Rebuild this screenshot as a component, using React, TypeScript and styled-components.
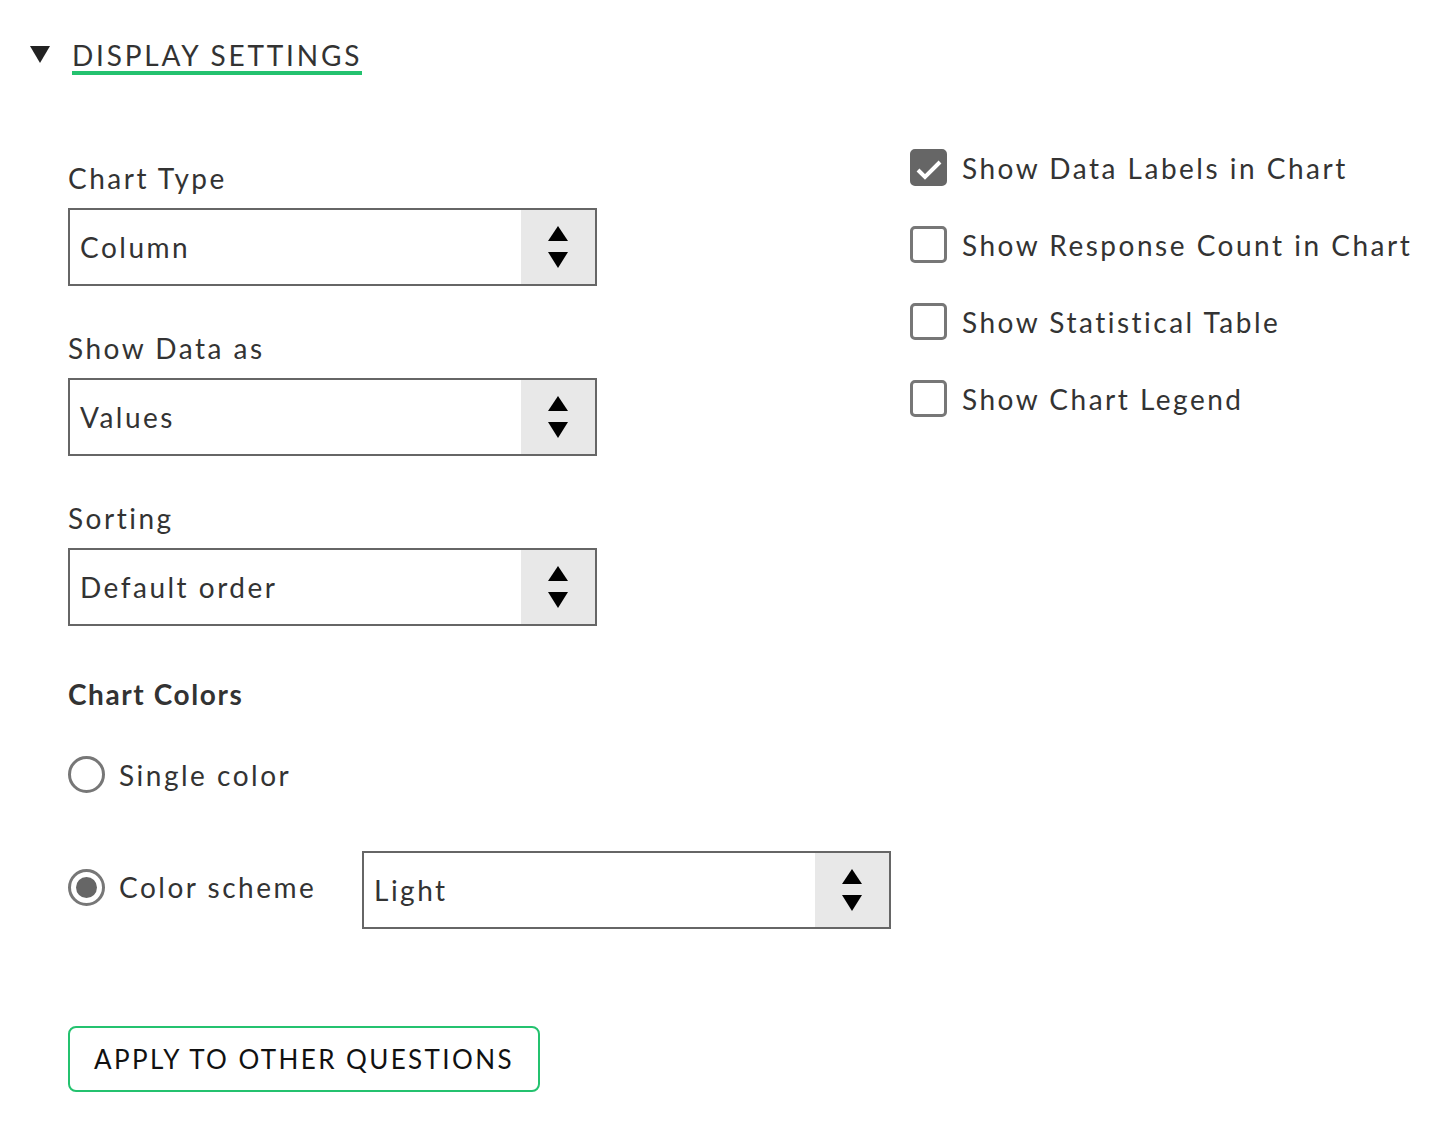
import React from "react";
import styled, { createGlobalStyle } from "styled-components";

const Global = createGlobalStyle`
  html, body { margin: 0; padding: 0; background: #fff; }
  body { font-family: "Lato", "Liberation Sans", sans-serif; color: #333; }
`;

const Page = styled.div`
  padding: 40px 0 0 30px;
  width: 1416px;
  box-sizing: border-box;
`;

const Header = styled.div`
  display: flex;
  align-items: flex-start;
  gap: 22px;
`;

const Caret = styled.span`
  display: block;
  width: 0;
  height: 0;
  margin-top: 6px;
  border-left: 10px solid transparent;
  border-right: 10px solid transparent;
  border-top: 17px solid #222;
`;

const Title = styled.h2`
  margin: 0;
  font-size: 28px;
  font-weight: 400;
  letter-spacing: 2.8px;
  line-height: 30px;
  color: #333;
  padding-bottom: 1px;
  border-bottom: 4px solid #24c26f;
`;

const Body = styled.div`
  display: grid;
  grid-template-columns: 842px 1fr;
  padding-left: 38px;
  margin-top: 76px;
`;

const LeftCol = styled.div`
  display: flex;
  flex-direction: column;
  padding-top: 10px;
`;

const Field = styled.div`
  display: flex;
  flex-direction: column;
  gap: 13px;
  margin-bottom: 45px;
`;

const Label = styled.div<{ $bold?: boolean }>`
  font-size: 28px;
  line-height: 34px;
  font-weight: ${(p) => (p.$bold ? 700 : 400)};
  letter-spacing: ${(p) => (p.$bold ? "1.6px" : "2.5px")};
  color: #333;
`;

const SelectBox = styled.div<{ $offset?: number }>`
  display: flex;
  width: 529px;
  height: 78px;
  box-sizing: border-box;
  border: 2px solid #666;
  background: #fff;
  margin-top: ${(p) => p.$offset ?? 0}px;
`;

const SelectValue = styled.div`
  flex: 1;
  display: flex;
  align-items: center;
  padding-left: 10px;
  font-size: 28px;
  letter-spacing: 2.5px;
  color: #333;
`;

const ArrowBox = styled.div`
  width: 74px;
  background: #e8e8e8;
  display: flex;
  align-items: center;
  justify-content: center;
`;

const Arrows = () => (
  <svg width="22" height="44" viewBox="0 0 22 44">
    <polygon points="11,1 21,16 1,16" fill="#000" />
    <polygon points="1,27 21,27 11,43" fill="#000" />
  </svg>
);

const Select = ({ value, offset }: { value: string; offset?: number }) => (
  <SelectBox $offset={offset}>
    <SelectValue>{value}</SelectValue>
    <ArrowBox>
      <Arrows />
    </ArrowBox>
  </SelectBox>
);

const ColorsHeading = styled(Label)`
  margin-top: 6px;
`;

const RadioRow = styled.div<{ $mt: number }>`
  display: flex;
  align-items: center;
  margin-top: ${(p) => p.$mt}px;
`;

const RadioCircle = styled.span<{ $on?: boolean }>`
  width: 37px;
  height: 37px;
  box-sizing: border-box;
  border-radius: 50%;
  border: 3px solid #777;
  display: flex;
  align-items: center;
  justify-content: center;
  flex-shrink: 0;
  &::after {
    content: "";
    display: ${(p) => (p.$on ? "block" : "none")};
    width: 21px;
    height: 21px;
    border-radius: 50%;
    background: #666;
  }
`;

const RadioText = styled.span<{ $w?: number }>`
  font-size: 28px;
  letter-spacing: 2.5px;
  color: #333;
  margin-left: 14px;
  width: ${(p) => (p.$w ? `${p.$w}px` : "auto")};
`;

const ApplyButton = styled.button`
  margin-top: 97px;
  align-self: flex-start;
  width: 472px;
  height: 66px;
  box-sizing: border-box;
  border: 2px solid #24c26f;
  border-radius: 8px;
  background: #fff;
  font-family: inherit;
  font-size: 26px;
  letter-spacing: 2.4px;
  color: #111;
  cursor: pointer;
`;

const RightCol = styled.div`
  display: flex;
  flex-direction: column;
  gap: 40px;
  margin-top: -2px;
`;

const CheckRow = styled.label`
  display: flex;
  align-items: center;
  gap: 15px;
`;

const Box = styled.span<{ $on?: boolean }>`
  width: 37px;
  height: 37px;
  box-sizing: border-box;
  border-radius: 5px;
  border: 3px solid #777;
  background: ${(p) => (p.$on ? "#666" : "#fff")};
  border-color: ${(p) => (p.$on ? "#666" : "#777")};
  display: flex;
  align-items: center;
  justify-content: center;
  flex-shrink: 0;
`;

const CheckText = styled.span`
  font-size: 28px;
  letter-spacing: 2.5px;
  color: #333;
`;

const Check = ({ on, text }: { on?: boolean; text: string }) => (
  <CheckRow>
    <Box $on={on}>
      {on && (
        <svg width="31" height="31" viewBox="0 0 31 31">
          <polyline points="5,18 12,25 27,10" fill="none" stroke="#fff" strokeWidth="4" />
        </svg>
      )}
    </Box>
    <CheckText>{text}</CheckText>
  </CheckRow>
);

export default function App() {
  return (
    <>
      <Global />
      <Page>
        <Header>
          <Caret />
          <Title>DISPLAY SETTINGS</Title>
        </Header>
        <Body>
          <LeftCol>
            <Field>
              <Label>Chart Type</Label>
              <Select value="Column" />
            </Field>
            <Field>
              <Label>Show Data as</Label>
              <Select value="Values" />
            </Field>
            <Field>
              <Label>Sorting</Label>
              <Select value="Default order" />
            </Field>
            <ColorsHeading $bold>Chart Colors</ColorsHeading>
            <RadioRow $mt={45}>
              <RadioCircle />
              <RadioText>Single color</RadioText>
            </RadioRow>
            <RadioRow $mt={52}>
              <RadioCircle $on />
              <RadioText $w={243}>Color scheme</RadioText>
              <Select value="Light" offset={6} />
            </RadioRow>
            <ApplyButton>APPLY TO OTHER QUESTIONS</ApplyButton>
          </LeftCol>
          <RightCol>
            <Check on text="Show Data Labels in Chart" />
            <Check text="Show Response Count in Chart" />
            <Check text="Show Statistical Table" />
            <Check text="Show Chart Legend" />
          </RightCol>
        </Body>
      </Page>
    </>
  );
}
